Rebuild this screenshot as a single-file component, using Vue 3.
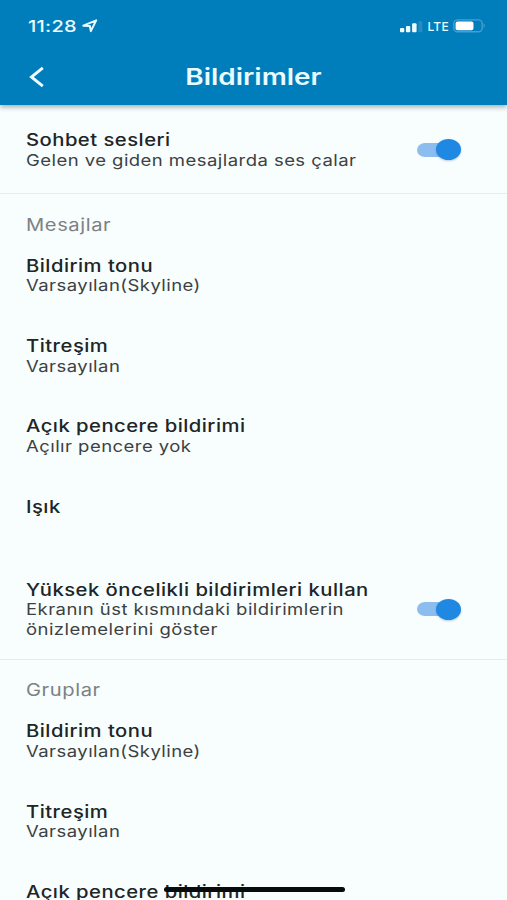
<script setup>
import { reactive } from 'vue'

const chatSounds = reactive({ title: 'Sohbet sesleri', lines: ['Gelen ve giden mesajlarda ses çalar'], on: true })
const sections = reactive([
  {
    name: 'Mesajlar',
    items: [
      { title: 'Bildirim tonu', value: 'Varsayılan(Skyline)' },
      { title: 'Titreşim', value: 'Varsayılan' },
      { title: 'Açık pencere bildirimi', value: 'Açılır pencere yok' },
      { title: 'Işık', value: '' }
    ],
    priority: {
      title: 'Yüksek öncelikli bildirimleri kullan',
      lines: ['Ekranın üst kısmındaki bildirimlerin', 'önizlemelerini göster'],
      on: true
    }
  },
  {
    name: 'Gruplar',
    items: [
      { title: 'Bildirim tonu', value: 'Varsayılan(Skyline)' },
      { title: 'Titreşim', value: 'Varsayılan' },
      { title: 'Açık pencere bildirimi', value: '' }
    ]
  }
])
</script>

<template>
  <div class="screen">
    <header class="top">
      <div class="status">
        <span class="time">11:28</span>
        <svg class="arrow" width="17" height="14" viewBox="0 0 17 14">
          <path d="M1.3 6.7 14.3 1.3 8.9 12.2 7.9 7Z" fill="none" stroke="#e9fcff" stroke-width="2" stroke-linejoin="round" />
        </svg>
        <svg class="signal" width="24" height="13" viewBox="0 0 24 13">
          <rect x="0" y="8" width="4.3" height="4.3" rx="1" fill="#effdff" />
          <rect x="6" y="6" width="4.3" height="6.3" rx="1" fill="#effdff" />
          <rect x="12.2" y="3.2" width="4.5" height="9.1" rx="1" fill="#effdff" />
          <rect x="18.5" y="1" width="4" height="11.3" rx="1" fill="#2889c3" />
        </svg>
        <span class="network">LTE</span>
        <svg class="battery" width="34" height="14" viewBox="0 0 34 14">
          <rect x="0.8" y="0.8" width="28.6" height="12" rx="3.8" fill="none" stroke="#459fd0" stroke-width="1.4" />
          <rect x="2.6" y="2.4" width="18" height="8.8" rx="2" fill="#fff" />
          <path d="M30.8 4.6Q33.4 6.8 30.8 9Z" fill="#459fd0" />
        </svg>
      </div>
      <div class="bar">
        <svg class="back" width="16" height="22" viewBox="0 0 16 22">
          <path d="M13.8 1.8 2.4 11 13.8 20.2" fill="none" stroke="#effdff" stroke-width="2.9" />
        </svg>
        <h1>Bildirimler</h1>
      </div>
    </header>

    <main>
      <div class="toggle-row first">
        <div class="copy">
          <div class="title"><span>{{ chatSounds.title }}</span></div>
          <div v-for="l in chatSounds.lines" :key="l" class="sub"><span>{{ l }}</span></div>
        </div>
        <button class="switch" :class="{ on: chatSounds.on }" @click="chatSounds.on = !chatSounds.on"><i></i></button>
      </div>
      <section v-for="s in sections" :key="s.name">
        <h2><span>{{ s.name }}</span></h2>
        <div v-for="item in s.items" :key="item.title" class="item">
          <div class="title"><span>{{ item.title }}</span></div>
          <div v-if="item.value" class="sub"><span>{{ item.value }}</span></div>
        </div>
        <div v-if="s.priority" class="toggle-row">
          <div class="copy">
            <div class="title"><span>{{ s.priority.title }}</span></div>
            <div v-for="l in s.priority.lines" :key="l" class="sub"><span>{{ l }}</span></div>
          </div>
          <button class="switch" :class="{ on: s.priority.on }" @click="s.priority.on = !s.priority.on"><i></i></button>
        </div>
      </section>
    </main>
    <div class="home-indicator"></div>
  </div>
</template>

<style>
body { margin: 0; }
</style>

<style scoped>
.screen {
  position: relative;
  width: 507px;
  height: 900px;
  overflow: hidden;
  background: #f8fdfe;
  font-family: Inter, "Liberation Sans", sans-serif;
  color: #202526;
}
.top {
  position: relative;
  height: 105px;
  background: #007ebc;
  box-shadow: 0 2px 5px rgba(30, 50, 60, 0.4);
  color: #e9fcff;
}
.status {
  display: flex;
  align-items: center;
  height: 52px;
  padding: 0 20px 0 28px;
}
.time {
  width: 54px;
  font-size: 16px;
  font-weight: 500;
  letter-spacing: 0.2px;
  transform: scaleX(1.25);
  transform-origin: 0 50%;
}
.signal { margin-left: 301px; }
.network {
  width: 24px;
  margin-left: 4px;
  font-size: 12px;
  font-weight: 500;
  letter-spacing: 0.3px;
}
.battery { margin-left: 2px; }
.bar {
  display: grid;
  grid-template-columns: 46px 1fr 46px;
  align-items: center;
  height: 50px;
}
.back { margin-left: 29px; }
h1 {
  margin: 0;
  text-align: center;
  font-size: 22.5px;
  line-height: 30px;
  font-weight: 600;
  transform: scaleX(1.24);
}
.title, .sub, h2 { white-space: nowrap; }
.title span, .sub span, h2 span {
  display: inline-block;
  transform-origin: 0 50%;
}
.title span { transform: scaleX(1.19); }
.sub span { transform: scaleX(1.155); }
h2 span { transform: scaleX(1.185); }
.title {
  height: 20.5px;
  font-size: 17px;
  line-height: 21px;
  font-weight: 500;
  letter-spacing: 0.4px;
}
.sub {
  height: 19.5px;
  font-size: 16px;
  line-height: 19.5px;
  letter-spacing: 0.4px;
  color: #3c4142;
}
.toggle-row {
  display: flex;
  justify-content: space-between;
  box-sizing: border-box;
  height: 100px;
  padding: 20px 46px 0 25.5px;
  border-bottom: 1px solid #e6ecee;
}
.toggle-row.first { height: 89px; padding-top: 25px; }
.switch {
  display: grid;
  align-items: center;
  width: 45px;
  height: 21px;
  margin-top: 19px;
  padding: 0;
  border: 0;
  background: none;
}
.first .switch { margin-top: 9px; }
.switch::before {
  content: "";
  grid-area: 1 / 1;
  width: 40px;
  height: 14px;
  margin-left: 1px;
  border-radius: 8px / 7px;
  background: #8cbdef;
}
.switch i {
  grid-area: 1 / 1;
  width: 25px;
  height: 21px;
  border-radius: 50%;
  background: #1e88e2;
  box-shadow: 0 1px 2px rgba(30, 90, 150, 0.3);
}
.switch.on i { margin-left: 20px; }
h2 {
  box-sizing: border-box;
  height: 44.5px;
  margin: 0;
  padding: 20.5px 25.5px 0;
  font-size: 17px;
  line-height: 21px;
  font-weight: 400;
  letter-spacing: 0.5px;
  color: #7c8182;
}
.item {
  box-sizing: border-box;
  height: 80.3px;
  padding: 17.3px 25.5px 0;
}
.home-indicator {
  position: absolute;
  left: 163.5px;
  top: 887px;
  width: 181px;
  height: 5px;
  border-radius: 3px;
  background: #080b0c;
}
</style>
